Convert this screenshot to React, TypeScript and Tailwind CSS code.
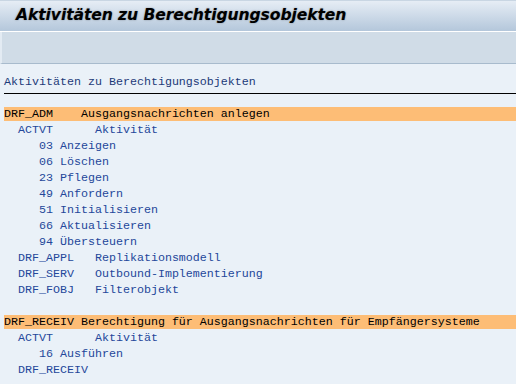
const rows: { text: string; hl?: boolean }[] = [
  { text: 'DRF_ADM    Ausgangsnachrichten anlegen', hl: true },
  { text: '  ACTVT      Aktivität' },
  { text: '     03 Anzeigen' },
  { text: '     06 Löschen' },
  { text: '     23 Pflegen' },
  { text: '     49 Anfordern' },
  { text: '     51 Initialisieren' },
  { text: '     66 Aktualisieren' },
  { text: '     94 Übersteuern' },
  { text: '  DRF_APPL   Replikationsmodell' },
  { text: '  DRF_SERV   Outbound-Implementierung' },
  { text: '  DRF_FOBJ   Filterobjekt' },
  { text: '' },
  { text: 'DRF_RECEIV Berechtigung für Ausgangsnachrichten für Empfängersysteme', hl: true },
  { text: '  ACTVT      Aktivität' },
  { text: '     16 Ausführen' },
  { text: '  DRF_RECEIV' },
];

export default function App() {
  return (
    <div className="w-[516px] h-[384px] overflow-hidden bg-[#eaf1f8]">
      {/* Title bar */}
      <div className="h-[32px] border-t border-[#c9d6e3] border-b border-b-white bg-gradient-to-b from-[#e6edf5] to-[#b4c7db] flex items-center pl-[16px]">
        <h1 className="font-['Verdana','DejaVu_Sans',sans-serif] font-bold italic text-[15.6px] text-black [text-shadow:0_0_2px_rgba(0,0,0,0.35)] tracking-[-0.1px]">
          Aktivitäten zu Berechtigungsobjekten
        </h1>
      </div>

      {/* Toolbar */}
      <div className="h-[32px] bg-[#d0dce7] border-b border-[#a8bbcd] border-l-2 border-l-[#e3ebf3]" />

      {/* List output */}
      <div className="font-['Liberation_Mono',monospace] text-[11.67px] whitespace-pre pl-[4px] pt-[10px]">
        <div className="h-[16px] leading-[16px] text-[#1c3a78]">Aktivitäten zu Berechtigungsobjekten</div>
        <div className="mt-[3px] h-px bg-black" />
        <div className="h-[12px]" />
        {rows.map((r, i) =>
          r.hl ? (
            <div key={i} className="h-[14px] my-px leading-[14px] bg-[#fdbd76] text-black">
              {r.text}
            </div>
          ) : (
            <div key={i} className="h-[16px] leading-[16px] text-[#24479a]">
              {r.text}
            </div>
          )
        )}
      </div>
    </div>
  );
}
